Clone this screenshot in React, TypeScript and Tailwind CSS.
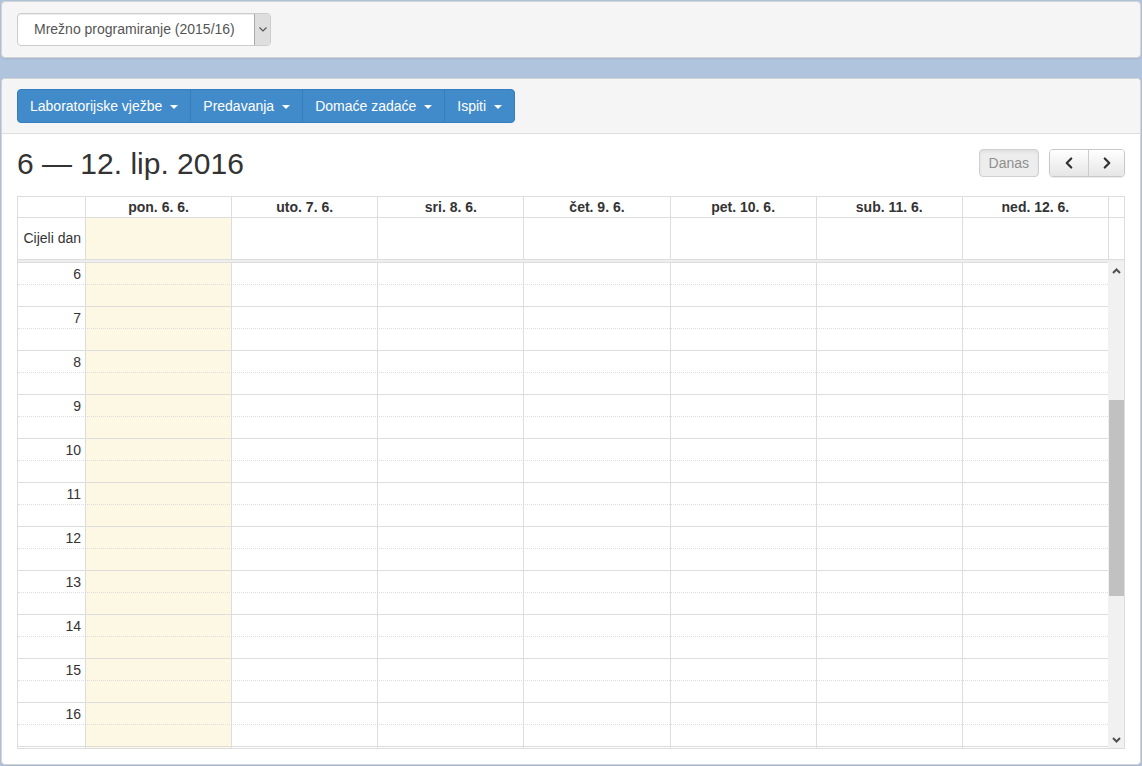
import { ChevronLeft, ChevronRight } from "lucide-react";

const MENUS = ["Laboratorijske vježbe", "Predavanja", "Domaće zadaće", "Ispiti"];

const DAYS = [
  "pon. 6. 6.",
  "uto. 7. 6.",
  "sri. 8. 6.",
  "čet. 9. 6.",
  "pet. 10. 6.",
  "sub. 11. 6.",
  "ned. 12. 6.",
];

const HOURS = [6, 7, 8, 9, 10, 11, 12, 13, 14, 15, 16];

function DayCells() {
  return (
    <>
      {DAYS.map((d, i) => (
        <div
          key={d}
          className={
            i === 0
              ? "border-l border-[#ddd] bg-[#fcf8e3]"
              : "border-l border-[#ddd]"
          }
        />
      ))}
    </>
  );
}

function SlotRow({ label, major }: { label?: number; major: boolean }) {
  return (
    <div
      className={
        major
          ? "grid h-[22px] shrink-0 grid-cols-[67px_repeat(7,minmax(0,1fr))] border-t border-solid border-[#ddd]"
          : "grid h-[22px] shrink-0 grid-cols-[67px_repeat(7,minmax(0,1fr))] border-t border-dotted border-[#ddd]"
      }
    >
      <div className="pr-[4px] pt-px text-right text-[14px] leading-[21px] text-[#333]">
        {label}
      </div>
      <DayCells />
    </div>
  );
}

function ScrollArrow({ up }: { up: boolean }) {
  return (
    <div className="flex h-[17px] items-center justify-center">
      <svg width="9" height="6" viewBox="0 0 9 6">
        <polyline
          points={up ? "1,5 4.5,1.5 8,5" : "1,1 4.5,4.5 8,1"}
          fill="none"
          stroke="#505050"
          strokeWidth="2"
        />
      </svg>
    </div>
  );
}

export default function App() {
  return (
    <div className="min-h-screen bg-[#b0c4de] pt-px font-['Liberation_Sans',Arial,sans-serif] text-[#333]">
      {/* izbor predmeta */}
      <div className="mx-px rounded-[4px] border border-[#d4d4d4] bg-[#f5f5f5] px-[15px] py-[11px] shadow-[0_1px_2px_rgba(0,0,0,0.08)]">
        <div className="flex h-[33px] w-[254px] overflow-hidden rounded-[4px] border border-[#ccc] bg-white shadow-[inset_0_1px_1px_rgba(0,0,0,0.075)]">
          <div className="flex flex-1 items-center pl-[16px] text-[14px] text-[#555]">
            Mrežno programiranje (2015/16)
          </div>
          <div className="flex w-[16px] items-center justify-center border-l border-[#aaa] bg-[#dedede]">
            <svg width="8" height="5" viewBox="0 0 8 5">
              <polyline points="0.5,0.5 4,4 7.5,0.5" fill="none" stroke="#555" strokeWidth="1.2" />
            </svg>
          </div>
        </div>
      </div>

      {/* kalendar */}
      <div className="mx-px mt-[20px] overflow-hidden rounded-[4px] border border-[#d4d4d4] bg-white shadow-[0_1px_2px_rgba(0,0,0,0.08)]">
        <div className="border-b border-[#ddd] bg-[#f5f5f5] px-[15px] py-[10px]">
          <div className="inline-flex h-[34px] overflow-hidden rounded-[4px] border border-[#357ebd] bg-[#428bca]">
            {MENUS.map((m, i) => (
              <div
                key={m}
                className={
                  i === 0
                    ? "flex items-center px-[12px] text-[14px] text-white"
                    : "flex items-center border-l border-[#357ebd] px-[12px] text-[14px] text-white"
                }
              >
                <span>{m}</span>
                <span className="ml-[8px] mt-[2px] h-0 w-0 border-x-[4px] border-t-[4px] border-x-transparent border-t-white" />
              </div>
            ))}
          </div>
        </div>

        <div className="p-[15px]">
          <div className="mb-[19px] flex h-[28px] items-center justify-between">
            <h2 className="pt-[2px] text-[30px] leading-[28px] text-[#333]">6 — 12. lip. 2016</h2>
            <div className="flex items-center gap-[10px]">
              <div className="flex h-[28px] items-center rounded-[4px] border border-[#cfcfcf] bg-[#ededed] px-[9px] text-[14px] text-[#8f8f8f] shadow-[inset_0_2px_3px_rgba(0,0,0,0.06)]">
                Danas
              </div>
              <div className="flex h-[28px] overflow-hidden rounded-[4px] border border-[#c8c8c8] shadow-[0_1px_1px_rgba(0,0,0,0.08)]">
                <div className="flex w-[38px] items-center justify-center bg-gradient-to-b from-white to-[#e6e6e6]">
                  <ChevronLeft size={18} strokeWidth={3} color="#333" />
                </div>
                <div className="flex w-[36px] items-center justify-center border-l border-[#ccc] bg-gradient-to-b from-white to-[#e6e6e6]">
                  <ChevronRight size={18} strokeWidth={3} color="#333" />
                </div>
              </div>
            </div>
          </div>

          <div className="border border-[#ddd]">
            {/* zaglavlje s danima */}
            <div className="grid h-[21px] grid-cols-[67px_repeat(7,minmax(0,1fr))_16px] border-b border-[#ddd]">
              <div />
              {DAYS.map((d) => (
                <div key={d} className="border-l border-[#ddd] text-center text-[14px] font-bold leading-[20px]">
                  {d}
                </div>
              ))}
              <div className="border-l border-[#ddd]" />
            </div>

            {/* cijeli dan */}
            <div className="grid h-[41px] grid-cols-[67px_repeat(7,minmax(0,1fr))_16px]">
              <div className="flex items-center justify-end pr-[4px] text-[14px]">Cijeli dan</div>
              <DayCells />
              <div className="border-l border-[#ddd]" />
            </div>

            <div className="h-[3px] border-t border-[#ddd] bg-[#eee]" />

            {/* satnica */}
            <div className="flex h-[486px] overflow-hidden">
              <div className="flex min-w-0 flex-1 flex-col">
                {HOURS.map((h) => (
                  <div key={h} className="contents">
                    <SlotRow label={h} major />
                    <SlotRow major={false} />
                  </div>
                ))}
                <SlotRow major />
              </div>
              <div className="flex w-[16px] shrink-0 flex-col bg-[#f1f1f1]">
                <ScrollArrow up />
                <div className="h-[121px]" />
                <div className="ml-px h-[196px] w-[15px] bg-[#c1c1c1]" />
                <div className="flex-1" />
                <ScrollArrow up={false} />
              </div>
            </div>
          </div>
        </div>
      </div>
    </div>
  );
}
